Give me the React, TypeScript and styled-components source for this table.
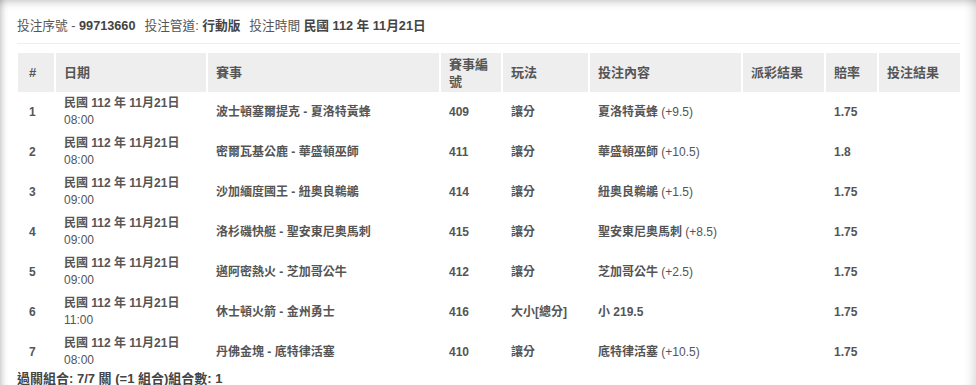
import React from "react";
import styled, { createGlobalStyle } from "styled-components";

const Global = createGlobalStyle`
  html, body { margin: 0; padding: 0; background: #fff; }
  body {
    font-family: "Liberation Sans", Arial, "Noto Sans CJK TC", sans-serif;
    color: #555;
  }
`;

const Panel = styled.div`
  width: 976px;
  height: 385px;
  box-sizing: border-box;
  padding: 16px 16px 0 17px;
  overflow: hidden;
  background: #fff;
  box-shadow: inset 0 9px 8px -7px rgba(0, 0, 0, 0.22),
    inset 7px 0 6px -5px rgba(0, 0, 0, 0.22),
    inset -12px 0 8px -8px rgba(0, 0, 0, 0.12);
`;

const InfoBar = styled.div`
  font-size: 12.7px;
  line-height: 20px;
  height: 21px;
  padding-bottom: 6px;
  border-bottom: 1px solid #eee;
  white-space: nowrap;
  color: #555;
`;

const Strong = styled.b`
  font-weight: bold;
  color: #444;
`;

const Gap = styled.span`
  display: inline-block;
  width: 9px;
`;

const Table = styled.table`
  margin-top: 9px;
  margin-left: 1px;
  border-collapse: separate;
  border-spacing: 0;
  table-layout: fixed;
  width: 942px;
  font-size: 12px;
`;

const Th = styled.th<{ $w: number }>`
  width: ${(p) => p.$w}px;
  background: #eee;
  height: 39px;
  box-sizing: border-box;
  padding: 0 8px;
  text-align: left;
  font-weight: bold;
  font-size: 13px;
  line-height: 17px;
  color: #555;
  border-left: 2px solid #fff;
  vertical-align: middle;
  &:first-child {
    border-left: none;
    padding-left: 11px;
  }
`;

const Td = styled.td`
  height: 40px;
  box-sizing: border-box;
  padding: 3px 8px;
  vertical-align: middle;
  font-weight: bold;
  color: #555;
  line-height: 17px;
  border-left: 2px solid transparent;
  &:first-child {
    border-left: none;
    padding-left: 11px;
  }
`;

const Time = styled.div`
  font-weight: normal;
  color: #555;
`;

const Light = styled.span`
  font-weight: normal;
`;

const Footer = styled.div`
  font-size: 13px;
  font-weight: bold;
  color: #444;
  line-height: 14px;
`;

type Row = {
  time: string;
  match: string;
  no: string;
  type: string;
  pick: string;
  line: string;
  odds: string;
};

const rows: Row[] = [
  { time: "08:00", match: "波士頓塞爾提克 - 夏洛特黃蜂", no: "409", type: "讓分", pick: "夏洛特黃蜂", line: "(+9.5)", odds: "1.75" },
  { time: "08:00", match: "密爾瓦基公鹿 - 華盛頓巫師", no: "411", type: "讓分", pick: "華盛頓巫師", line: "(+10.5)", odds: "1.8" },
  { time: "09:00", match: "沙加緬度國王 - 紐奥良鵜鶘", no: "414", type: "讓分", pick: "紐奥良鵜鶘", line: "(+1.5)", odds: "1.75" },
  { time: "09:00", match: "洛杉磯快艇 - 聖安東尼奥馬刺", no: "415", type: "讓分", pick: "聖安東尼奥馬刺", line: "(+8.5)", odds: "1.75" },
  { time: "09:00", match: "邁阿密熱火 - 芝加哥公牛", no: "412", type: "讓分", pick: "芝加哥公牛", line: "(+2.5)", odds: "1.75" },
  { time: "11:00", match: "休士頓火箭 - 金州勇士", no: "416", type: "大小[總分]", pick: "小 219.5", line: "", odds: "1.75" },
  { time: "08:00", match: "丹佛金塊 - 底特律活塞", no: "410", type: "讓分", pick: "底特律活塞", line: "(+10.5)", odds: "1.75" },
];

const cols: [string, number][] = [
  ["#", 36],
  ["日期", 152],
  ["賽事", 233],
  ["賽事編號", 62],
  ["玩法", 87],
  ["投注內容", 153],
  ["派彩結果", 83],
  ["賠率", 53],
  ["投注結果", 83],
];

export default function App() {
  return (
    <Panel>
      <Global />
      <InfoBar>
        投注序號 - <Strong>99713660</Strong>
        <Gap />
        投注管道: <Strong>行動版</Strong>
        <Gap />
        投注時間 <Strong>民國 112 年 11月21日</Strong>
      </InfoBar>
      <Table>
        <thead>
          <tr>
            {cols.map(([label, w]) => (
              <Th key={label} $w={w}>
                {label}
              </Th>
            ))}
          </tr>
        </thead>
        <tbody>
          {rows.map((r, i) => (
            <tr key={i}>
              <Td>{i + 1}</Td>
              <Td>
                民國 112 年 11月21日
                <Time>{r.time}</Time>
              </Td>
              <Td>{r.match}</Td>
              <Td>{r.no}</Td>
              <Td>{r.type}</Td>
              <Td>
                {r.pick}
                {r.line && <Light> {r.line}</Light>}
              </Td>
              <Td></Td>
              <Td>{r.odds}</Td>
              <Td></Td>
            </tr>
          ))}
        </tbody>
      </Table>
      <Footer>過關組合: 7/7 關 (=1 組合)組合數: 1</Footer>
    </Panel>
  );
}
